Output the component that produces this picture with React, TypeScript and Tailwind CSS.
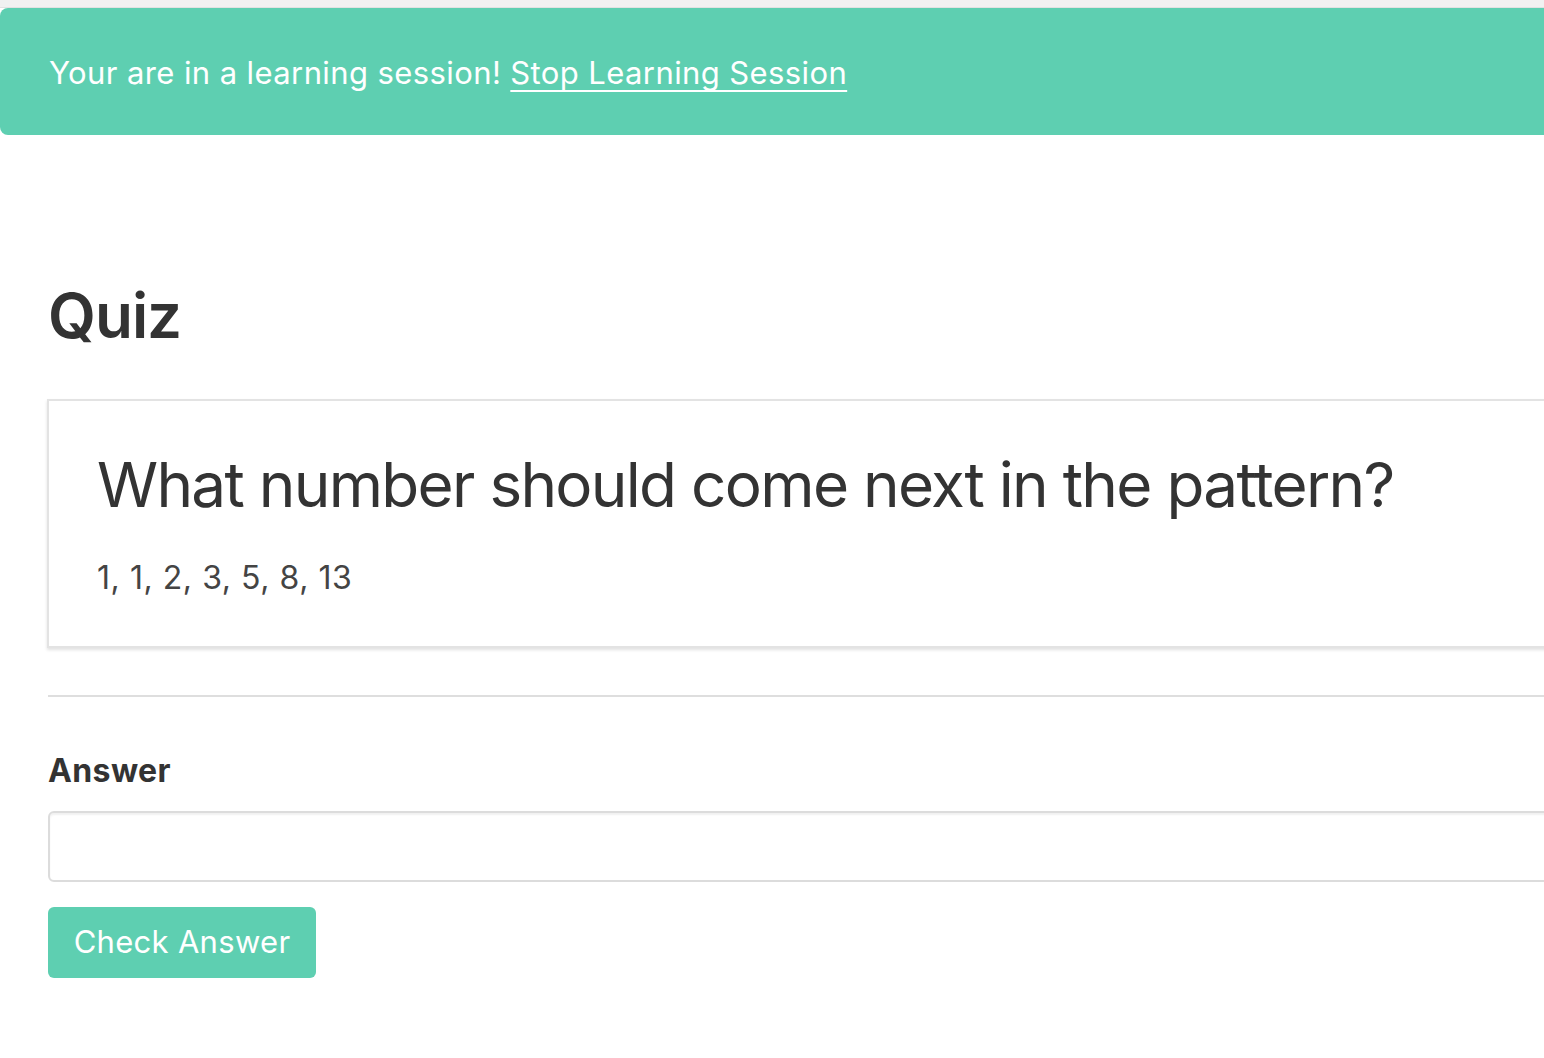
import React from 'react'

export default function App() {
    return (
        <div className="min-h-[1058px] w-full overflow-hidden bg-white text-[#333] font-['Inter','Noto_Sans',sans-serif]">
            <div className="h-[8px] bg-[#f1f1f1] border-b border-[#e2e2e2]"></div>
            {/* banner */}
            <div className="w-[1600px] h-[127px] flex items-center pt-[4px] pl-[49px] bg-[#5ecfb1] rounded-l-[8px] text-white text-[31px] tracking-[0.4px]">
                <span>Your are in a learning session!&nbsp;</span>
                <a href="#" className="underline underline-offset-[6px] decoration-2">
                    Stop Learning Session
                </a>
            </div>

            <div className="w-[1600px] pl-[48px]">
                <h1 className="mt-[150px] text-[62px] font-semibold leading-none tracking-[-1px] text-[#333]">
                    Quiz
                </h1>

                {/* question card */}
                <div className="mt-[52px] -ml-[1px] border-2 border-[#e3e3e3] shadow-[0_2px_3px_rgba(0,0,0,0.12)] bg-white pl-[48px] pt-[53px] pb-[52px]">
                    <h2 className="text-[62px] leading-none tracking-[-1.7px] text-[#333]">
                        What number should come next in the pattern?
                    </h2>
                    <p className="mt-[46px] text-[32px] leading-none tracking-[0.55px] text-[#444]">
                        1, 1, 2, 3, 5, 8, 13
                    </p>
                </div>

                <hr className="mt-[47px] border-t-2 border-[#dedede]" />

                {/* answer form */}
                <form className="mt-[58px]">
                    <label className="block text-[32px] font-bold leading-none tracking-[0.4px] text-[#333]">
                        Answer
                    </label>
                    <input
                        type="text"
                        className="mt-[24px] block w-full h-[71px] border-2 border-[#dcdcdc] rounded-[6px] shadow-[inset_0_2px_2px_rgba(0,0,0,0.06)] outline-none"
                    />
                    <button
                        type="button"
                        className="mt-[25px] w-[268px] h-[71px] rounded-[6px] bg-[#5ecfb1] text-white text-[31px] tracking-[0.3px]"
                    >
                        Check Answer
                    </button>
                </form>
            </div>
        </div>
    )
}
